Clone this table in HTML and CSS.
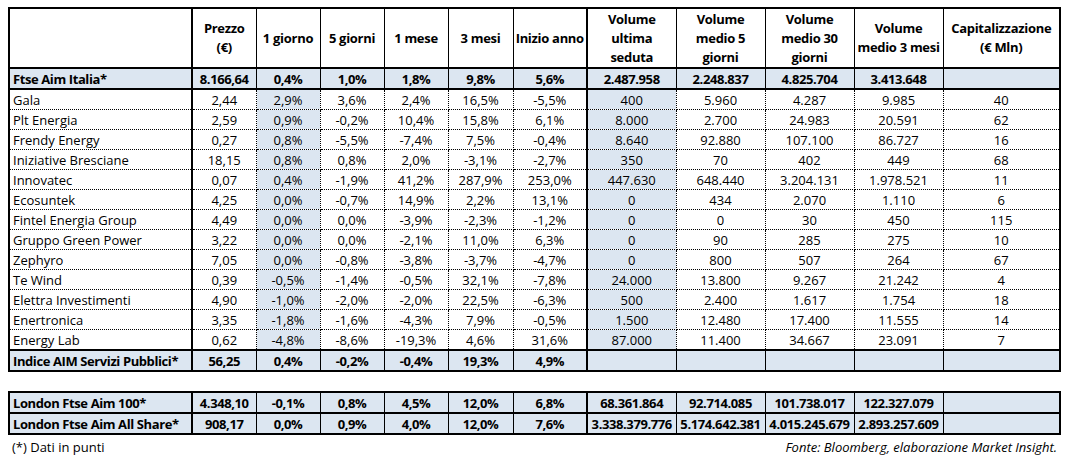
FILE: index.html
```html
<!DOCTYPE html>
<html lang="it">
<head>
<meta charset="utf-8">
<title>AIM Servizi Pubblici</title>
<link rel="stylesheet" href="styles.css">
</head>
<body>
<div class="page">
<table class="grid">
  <colgroup>
    <col class="w-name"><col class="w-n"><col class="w-n"><col class="w-n"><col class="w-n"><col class="w-n5"><col class="w-ia"><col class="w-v"><col class="w-v"><col class="w-v"><col class="w-v"><col class="w-cap">
  </colgroup>
  <thead>
    <tr class="head">
      <th></th>
      <th class="sep">Prezzo<br>(€)</th>
      <th>1 giorno</th>
      <th>5 giorni</th>
      <th>1 mese</th>
      <th>3 mesi</th>
      <th>Inizio anno</th>
      <th class="sep">Volume<br>ultima<br>seduta</th>
      <th>Volume<br>medio 5<br>giorni</th>
      <th>Volume<br>medio 30<br>giorni</th>
      <th>Volume<br>medio 3 mesi</th>
      <th>Capitalizzazione<br>(€ Mln)</th>
    </tr>
  </thead>
  <tbody>
    <tr class="total">
      <td class="name">Ftse Aim Italia*</td><td class="sep">8.166,64</td><td>0,4%</td><td>1,0%</td><td>1,8%</td><td>9,8%</td><td>5,6%</td><td class="sep">2.487.958</td><td>2.248.837</td><td>4.825.704</td><td>3.413.648</td><td></td>
    </tr>
    <tr class="row first"><td class="name">Gala</td><td class="sep">2,44</td><td class="hl">2,9%</td><td>3,6%</td><td>2,4%</td><td>16,5%</td><td>-5,5%</td><td class="sep hl">400</td><td>5.960</td><td>4.287</td><td>9.985</td><td>40</td></tr>
    <tr class="row"><td class="name">Plt Energia</td><td class="sep">2,59</td><td class="hl">0,9%</td><td>-0,2%</td><td>10,4%</td><td>15,8%</td><td>6,1%</td><td class="sep hl">8.000</td><td>2.700</td><td>24.983</td><td>20.591</td><td>62</td></tr>
    <tr class="row"><td class="name">Frendy Energy</td><td class="sep">0,27</td><td class="hl">0,8%</td><td>-5,5%</td><td>-7,4%</td><td>7,5%</td><td>-0,4%</td><td class="sep hl">8.640</td><td>92.880</td><td>107.100</td><td>86.727</td><td>16</td></tr>
    <tr class="row"><td class="name">Iniziative Bresciane</td><td class="sep">18,15</td><td class="hl">0,8%</td><td>0,8%</td><td>2,0%</td><td>-3,1%</td><td>-2,7%</td><td class="sep hl">350</td><td>70</td><td>402</td><td>449</td><td>68</td></tr>
    <tr class="row"><td class="name">Innovatec</td><td class="sep">0,07</td><td class="hl">0,4%</td><td>-1,9%</td><td>41,2%</td><td>287,9%</td><td>253,0%</td><td class="sep hl">447.630</td><td>648.440</td><td>3.204.131</td><td>1.978.521</td><td>11</td></tr>
    <tr class="row"><td class="name">Ecosuntek</td><td class="sep">4,25</td><td class="hl">0,0%</td><td>-0,7%</td><td>14,9%</td><td>2,2%</td><td>13,1%</td><td class="sep hl">0</td><td>434</td><td>2.070</td><td>1.110</td><td>6</td></tr>
    <tr class="row"><td class="name">Fintel Energia Group</td><td class="sep">4,49</td><td class="hl">0,0%</td><td>0,0%</td><td>-3,9%</td><td>-2,3%</td><td>-1,2%</td><td class="sep hl">0</td><td>0</td><td>30</td><td>450</td><td>115</td></tr>
    <tr class="row"><td class="name">Gruppo Green Power</td><td class="sep">3,22</td><td class="hl">0,0%</td><td>0,0%</td><td>-2,1%</td><td>11,0%</td><td>6,3%</td><td class="sep hl">0</td><td>90</td><td>285</td><td>275</td><td>10</td></tr>
    <tr class="row"><td class="name">Zephyro</td><td class="sep">7,05</td><td class="hl">0,0%</td><td>-0,8%</td><td>-3,8%</td><td>-3,7%</td><td>-4,7%</td><td class="sep hl">0</td><td>800</td><td>507</td><td>264</td><td>67</td></tr>
    <tr class="row"><td class="name">Te Wind</td><td class="sep">0,39</td><td class="hl">-0,5%</td><td>-1,4%</td><td>-0,5%</td><td>32,1%</td><td>-7,8%</td><td class="sep hl">24.000</td><td>13.800</td><td>9.267</td><td>21.242</td><td>4</td></tr>
    <tr class="row"><td class="name">Elettra Investimenti</td><td class="sep">4,90</td><td class="hl">-1,0%</td><td>-2,0%</td><td>-2,0%</td><td>22,5%</td><td>-6,3%</td><td class="sep hl">500</td><td>2.400</td><td>1.617</td><td>1.754</td><td>18</td></tr>
    <tr class="row"><td class="name">Enertronica</td><td class="sep">3,35</td><td class="hl">-1,8%</td><td>-1,6%</td><td>-4,3%</td><td>7,9%</td><td>-0,5%</td><td class="sep hl">1.500</td><td>12.480</td><td>17.400</td><td>11.555</td><td>14</td></tr>
    <tr class="row"><td class="name">Energy Lab</td><td class="sep">0,62</td><td class="hl">-4,8%</td><td>-8,6%</td><td>-19,3%</td><td>4,6%</td><td>31,6%</td><td class="sep hl">87.000</td><td>11.400</td><td>34.667</td><td>23.091</td><td>7</td></tr>
    <tr class="total">
      <td class="name">Indice AIM Servizi Pubblici*</td><td class="sep">56,25</td><td>0,4%</td><td>-0,2%</td><td>-0,4%</td><td>19,3%</td><td>4,9%</td><td class="sep"></td><td></td><td></td><td></td><td></td>
    </tr>
  </tbody>
</table>

<table class="grid london">
  <colgroup>
    <col class="w-name"><col class="w-n"><col class="w-n"><col class="w-n"><col class="w-n"><col class="w-n5"><col class="w-ia"><col class="w-v"><col class="w-v"><col class="w-v"><col class="w-v"><col class="w-cap">
  </colgroup>
  <tbody>
    <tr class="total">
      <td class="name">London Ftse Aim 100*</td><td class="sep">4.348,10</td><td>-0,1%</td><td>0,8%</td><td>4,5%</td><td>12,0%</td><td>6,8%</td><td class="sep">68.361.864</td><td>92.714.085</td><td>101.738.017</td><td>122.327.079</td><td></td>
    </tr>
    <tr class="total">
      <td class="name">London Ftse Aim All Share*</td><td class="sep">908,17</td><td>0,0%</td><td>0,9%</td><td>4,0%</td><td>12,0%</td><td>7,6%</td><td class="sep">3.338.379.776</td><td>5.174.642.381</td><td>4.015.245.679</td><td>2.893.257.609</td><td></td>
    </tr>
  </tbody>
</table>

<div class="foot">
  <span>(*) Dati in punti</span>
  <span class="src">Fonte: Bloomberg, elaborazione Market Insight.</span>
</div>
</div>
</body>
</html>
```

FILE: styles.css
```css
html, body {
  margin: 0;
  padding: 0;
  background: #fff;
}

body {
  font-family: "Open Sans", "Liberation Sans", sans-serif;
  font-size: 13px;
  color: #000;
}

.page {
  padding: 7px 0 0 8px;
  width: 1051px;
}

.grid {
  border-collapse: collapse;
  table-layout: fixed;
  width: 1051px;
  border: 2px solid #000;
}

.w-name { width: 183px; }
.w-n { width: 64px; }
.w-n5 { width: 65px; }
.w-ia { width: 74px; }
.w-v { width: 89px; }
.w-cap { width: 117px; }

.grid th,
.grid td {
  padding: 0 1px;
  text-align: center;
  white-space: nowrap;
  overflow: hidden;
}

.head th {
  height: 58px;
  font-weight: 700;
  line-height: 19px;
  letter-spacing: -0.3px;
  border: 1px solid #000;
  border-bottom: 2px solid #000;
  vertical-align: middle;
}

.grid .name {
  text-align: left;
  padding-left: 3px;
}

.total td {
  height: 19px;
  background: #dce6f1;
  font-weight: 700;
  letter-spacing: -0.4px;
  border: 1px solid #000;
  border-top: 2px solid #000;
  border-bottom: 2px solid #000;
}

.row td {
  height: 19px;
  border: 1px dotted #000;
}

.grid .sep {
  border-left: 2px solid #000;
}

.row .hl {
  background: #dce6f1;
}

.london {
  margin-top: 19px;
}

.foot {
  display: flex;
  justify-content: space-between;
  padding: 3px 2px 0 4px;
  line-height: 18px;
}

.foot .src {
  font-style: italic;
}
```
